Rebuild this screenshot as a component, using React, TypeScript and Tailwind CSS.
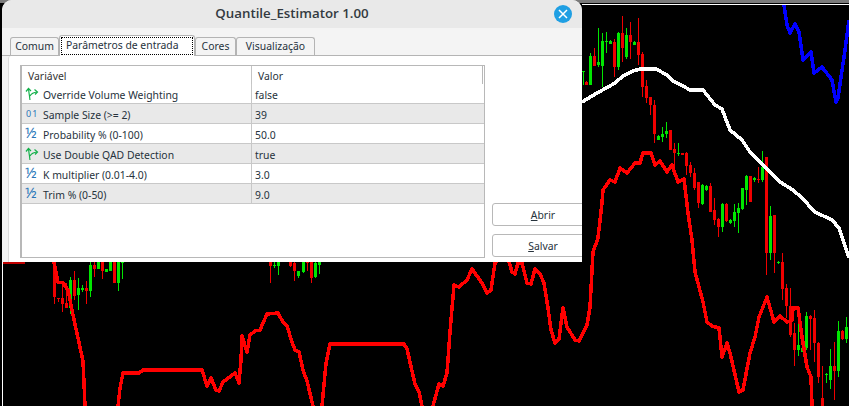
import React from "react";

type Candle = [number, number, number, number, number, "g" | "r"];

const candles: Candle[] = [
  [583, 71, 85, 71, 72, "g"], [586, 81, 85, 82, 85, "r"], [590, 53, 85, 56, 85, "g"], [594, 48, 66, 56, 66, "r"],
  [598, 28, 67, 62, 65, "g"], [602, 33, 87, 41, 66, "g"], [606, 32, 53, 41, 42, "g"], [610, 40, 44, 41, 44, "g"],
  [614, 39, 77, 42, 67, "r"], [618, 32, 70, 33, 67, "g"], [622, 16, 62, 33, 48, "r"], [626, 28, 59, 35, 57, "g"],
  [630, 22, 59, 35, 42, "r"], [634, 41, 45, 42, 45, "g"], [638, 18, 65, 42, 55, "r"], [642, 52, 97, 54, 87, "r"],
  [646, 80, 103, 86, 98, "r"], [650, 98, 115, 97, 105, "r"], [654, 100, 143, 105, 134, "r"], [658, 135, 140, 136, 140, "g"],
  [662, 127, 142, 134, 137, "g"], [666, 122, 138, 131, 134, "g"], [670, 130, 150, 130, 150, "r"], [674, 143, 167, 149, 153, "r"],
  [678, 143, 156, 153, 154, "g"], [682, 153, 155, 153, 155, "r"], [686, 152, 175, 153, 166, "r"], [690, 162, 177, 165, 173, "r"],
  [694, 168, 190, 173, 188, "r"], [698, 182, 208, 182, 203, "r"], [702, 184, 205, 185, 204, "g"], [706, 185, 191, 186, 190, "g"],
  [710, 183, 212, 186, 212, "r"], [714, 198, 225, 210, 220, "r"], [718, 218, 237, 219, 227, "r"], [722, 203, 232, 204, 227, "g"],
  [726, 203, 222, 204, 221, "r"], [730, 219, 224, 220, 223, "g"], [734, 204, 227, 212, 221, "g"], [738, 203, 233, 208, 213, "g"],
  [742, 188, 210, 188, 209, "g"], [746, 175, 205, 176, 190, "g"], [750, 176, 202, 176, 202, "r"], [754, 177, 182, 178, 180, "g"],
  [758, 167, 183, 179, 180, "r"], [762, 151, 182, 167, 180, "g"], [766, 157, 275, 157, 253, "r"], [770, 206, 260, 216, 253, "g"],
  [774, 215, 273, 215, 253, "r"], [778, 261, 264, 262, 263, "g"], [782, 253, 300, 262, 289, "r"], [786, 284, 318, 288, 306, "r"],
  [790, 288, 337, 306, 335, "r"], [794, 323, 366, 333, 350, "r"], [798, 319, 356, 345, 350, "g"], [802, 347, 352, 348, 352, "g"],
  [806, 312, 350, 316, 348, "g"], [810, 315, 350, 316, 319, "r"], [814, 310, 362, 318, 343, "r"], [818, 342, 383, 343, 377, "r"],
  [822, 366, 406, 398, 406, "r"], [826, 373, 383, 374, 375, "g"], [830, 349, 389, 366, 380, "g"], [834, 342, 400, 366, 371, "r"],
  [838, 321, 377, 331, 371, "g"], [842, 330, 340, 331, 339, "r"], [846, 317, 343, 327, 339, "g"],
  [54, 262, 304, 262, 297, "r"], [58, 298, 302, 298, 299, "r"], [62, 285, 312, 298, 304, "r"], [66, 283, 308, 303, 308, "r"],
  [70, 277, 314, 280, 308, "g"], [74, 271, 300, 280, 296, "r"], [78, 278, 310, 288, 295, "g"], [82, 285, 292, 288, 290, "g"],
  [86, 281, 304, 288, 291, "r"], [90, 262, 297, 265, 291, "g"], [94, 262, 277, 265, 269, "r"], [98, 262, 269, 262, 269, "g"],
  [102, 262, 279, 262, 271, "r"], [106, 269, 272, 269, 272, "g"], [110, 262, 271, 262, 271, "g"], [114, 262, 283, 262, 283, "r"],
  [118, 262, 291, 262, 283, "g"], [122, 262, 279, 262, 262, "g"], [270, 262, 283, 262, 266, "r"], [274, 262, 268, 265, 266, "g"],
  [278, 262, 275, 262, 266, "g"], [290, 262, 267, 262, 266, "r"], [294, 262, 281, 263, 271, "r"], [298, 271, 278, 271, 276, "g"],
  [303, 262, 273, 262, 272, "g"], [307, 262, 271, 262, 262, "r"], [311, 262, 283, 262, 278, "r"], [315, 262, 278, 263, 277, "g"],
  [319, 262, 274, 262, 265, "g"],
];

const redLines = [
  "53,258 58,282 63,283 68,290 73,315 78,338 83,361 85,406",
  "118,406 120,388 123,373 139,373 143,370 202,370 207,386 211,378 216,390 219,391 223,382 235,373 239,383 241,360 242,336 247,352 250,335 255,331 260,330 267,314 278,313 283,322 287,326 292,342 295,350 299,352 303,370 307,381 313,406",
  "322,406 326,363 330,344 404,344 407,349 415,384 419,392 422,406",
  "433,406 439,384 443,386 447,373 450,332 454,285 459,287 467,280 472,269 482,283 487,293 491,290 495,263 500,258",
  "508,258 512,272 515,274 518,263 522,263 527,283 531,284 535,269 540,274 544,283 548,308 551,330 555,343 559,339 563,308 567,327 575,340 579,341 587,325 590,307 593,252 598,238 602,203 603,190 610,180 615,182 620,168 627,173 635,163 640,163 643,153 651,153 655,165 660,161 667,172 672,165 678,182 684,179 688,213 692,240 695,272 703,302 707,322 712,326 719,328 722,357 727,343 730,353 739,392 743,390 750,353 755,337 759,317 767,297 774,322 780,316 787,322 792,320 793,308 798,308 802,337 807,367 811,377 812,406",
];

const whiteLine = "582,102 597,93 608,87 615,83 623,76 633,71 640,69 656,69 667,75 673,81 683,86 690,90 703,90 715,105 722,109 730,130 742,140 750,152 780,182 793,190 802,198 815,212 832,220 839,228 849,258";
const blueLine = "784,5 787,25 790,33 795,24 799,32 803,60 811,52 814,73 822,67 832,80 836,102 838,98 845,50 849,20";

type Row = { icon: "bool" | "int" | "float"; name: string; value: string };

const rows: Row[] = [
  { icon: "bool", name: "Override Volume Weighting", value: "false" },
  { icon: "int", name: "Sample Size (>= 2)", value: "39" },
  { icon: "float", name: "Probability % (0-100)", value: "50.0" },
  { icon: "bool", name: "Use Double QAD Detection", value: "true" },
  { icon: "float", name: "K multiplier (0.01-4.0)", value: "3.0" },
  { icon: "float", name: "Trim % (0-50)", value: "9.0" },
];

function Chart() {
  return (
    <svg className="absolute inset-0" width="849" height="406" viewBox="0 0 849 406">
      <rect x="0" y="0" width="849" height="3" fill="#7a7a7a" />
      <rect x="582" y="4" width="267" height="1" fill="#ffffff" />
      <rect x="2" y="262" width="1" height="144" fill="#ffffff" />
      <rect x="3" y="262" width="22" height="2" fill="#c00000" />
      {candles.map(([x, wt, wb, bt, bb, c], i) => {
        const col = c === "g" ? "#00e600" : "#f00000";
        return (
          <g key={i} fill={col}>
            <rect x={x} y={wt} width="1" height={wb - wt} />
            <rect x={x - 1} y={bt} width="3" height={Math.max(bb - bt, 1)} />
          </g>
        );
      })}
      <polyline points={whiteLine} fill="none" stroke="#ffffff" strokeWidth="3.5" shapeRendering="crispEdges" strokeLinejoin="round" />
      <polyline points={blueLine} fill="none" stroke="#0000ff" strokeWidth="3.5" shapeRendering="crispEdges" strokeLinejoin="round" />
      {redLines.map((p, i) => (
        <polyline key={i} points={p} fill="none" stroke="#ff0000" strokeWidth="3.5" shapeRendering="crispEdges" strokeLinejoin="round" />
      ))}
    </svg>
  );
}

function BoolIcon() {
  return (
    <svg width="14" height="14" viewBox="0 0 14 14" fill="none" stroke="#14b04a" strokeWidth="1.2">
      <path d="M5 13 L3.5 2" />
      <path d="M1 4.5 L3.5 1.5 L6 4" />
      <path d="M5 9 Q7 5.5 12 5" />
      <path d="M9.5 2.5 L12.5 5 L10 7.5" />
    </svg>
  );
}

function RowIcon({ kind }: { kind: Row["icon"] }) {
  if (kind === "bool") return <div className="-mt-[5px] flex"><BoolIcon /></div>;
  if (kind === "int")
    return <span className="text-[9px] leading-none tracking-[1px] text-[#2a76b8] pl-[1px] -mt-[6px]">01</span>;
  return <span className="text-[15px] leading-none text-[#2a76b8] -mt-[7px]">½</span>;
}

function Tab({ label, active, w }: { label: string; active?: boolean; w: string }) {
  return active ? (
    <div className={`${w} h-[21px] bg-white border border-b-0 border-[#b4b4b4] rounded-t-[3px] p-[1px] -mb-[1px] relative z-10`}>
      <div className="h-[18px] border border-dotted border-black flex items-center justify-start pl-[4px] pb-[1px]">{label}</div>
    </div>
  ) : (
    <div className={`${w} h-[18px] bg-[#f4f4f4] border border-b-0 border-[#b4b4b4] rounded-t-[3px] flex items-center justify-center`}>
      {label}
    </div>
  );
}

export default function App() {
  return (
    <div className="relative w-[849px] h-[406px] bg-black overflow-hidden font-['Noto_Sans',sans-serif] text-[10.4px] text-[#26323c]">
      <Chart />
      <div className="absolute left-[2px] top-0 w-[580px] h-[262px] flex flex-col bg-[#f4f4f4] rounded-t-[10px] overflow-hidden">
        <div className="relative h-[28px] bg-[#e9e9e9] flex items-center justify-center shrink-0 pb-[1px]">
          <span className="font-['Open_Sans',sans-serif] font-semibold text-[13.3px] text-[#333a40]">Quantile_Estimator 1.00</span>
          <div className="absolute left-[552px] top-[5px] w-[18px] h-[18px] rounded-full bg-[#1f9fe3] flex items-center justify-center">
            <svg width="10" height="10" viewBox="0 0 10 10" stroke="#ffffff" strokeWidth="1.5" fill="none">
              <path d="M1 1 L9 9 M9 1 L1 9" />
            </svg>
          </div>
        </div>
        <div className="h-[28px] shrink-0 flex items-end pl-[8px] border-b border-[#b4b4b4]">
          <Tab label="Comum" w="w-[49px]" />
          <Tab label="Parâmetros de entrada" active w="w-[136px]" />
          <Tab label="Cores" w="w-[41px]" />
          <Tab label="Visualização" w="w-[79px]" />
        </div>
        <div className="flex-1 flex pl-[6px]">
          <div className="flex-1 bg-white border-l border-[#dcdcdc] rounded-tl-[3px] flex pl-[11px] pt-[9px]">
            <div className="w-[465px] h-[193px] border border-l-2 border-[#b8b8b8] relative">
              <div className="absolute right-[1px] top-0 w-[1px] h-[18px] bg-[#b8b8b8]" />
              <div className="h-[18px] flex items-center">
                <div className="w-[230px] pl-[6px] pt-[4px] h-full flex items-center border-r border-[#c4c4c4] text-[#333]">Variável</div>
                <div className="pl-[6px] pt-[4px]">Valor</div>
              </div>
              {rows.map((r, i) => (
                <div key={r.name} className={`h-[20px] flex items-center border-b border-[#c8c8c8] ${i % 2 === 1 ? "bg-[#e9e9e9]" : "bg-white"}`}>
                  <div className="w-[230px] h-full flex items-center border-r border-[#c8c8c8] pt-[5px]">
                    <div className="w-[21px] pl-[3px] flex items-center shrink-0"><RowIcon kind={r.icon} /></div>
                    <span>{r.name}</span>
                  </div>
                  <div className="pl-[3px] pt-[5px]">{r.value}</div>
                </div>
              ))}
            </div>
            <div className="ml-[7px] pt-[138px] flex flex-col gap-[8px] w-[90px] shrink-0">
              <div className="h-[23px] w-[100px] shrink-0 border border-[#b8b8b8] rounded-[3px] bg-white flex items-center justify-center pt-[3px] pl-[2px]">
                <span><span className="underline">A</span>brir</span>
              </div>
              <div className="h-[23px] w-[100px] shrink-0 border border-[#b8b8b8] rounded-[3px] bg-white flex items-center justify-center pt-[3px] pl-[2px]">
                <span><span className="underline">S</span>alvar</span>
              </div>
            </div>
          </div>
        </div>
      </div>
    </div>
  );
}
